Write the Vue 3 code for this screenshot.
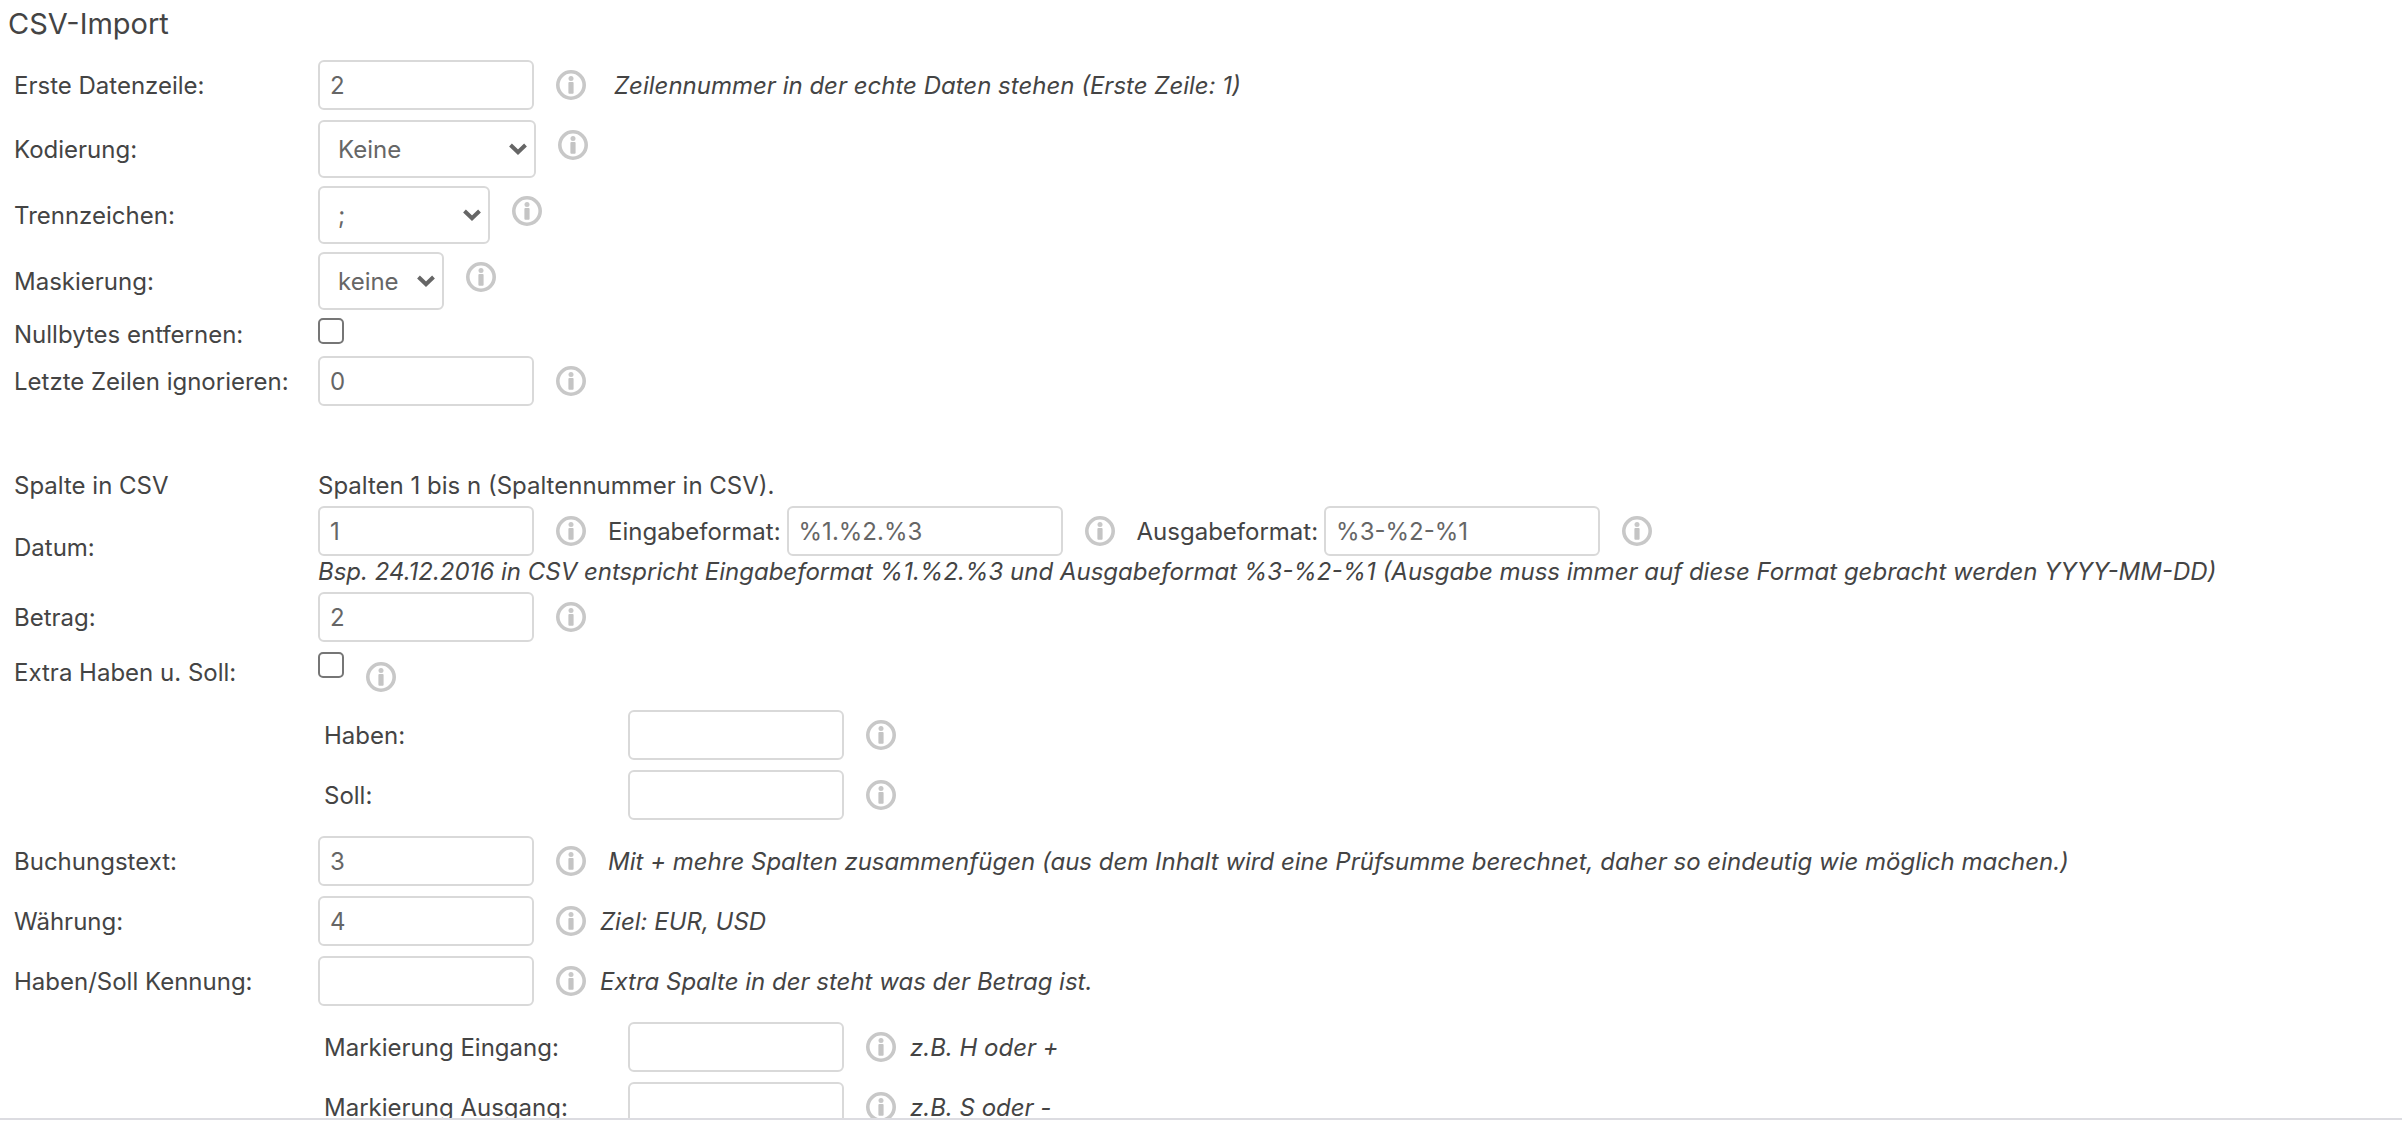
<script setup>
import { h, reactive } from 'vue'

const form = reactive({
  firstRow: '2',
  encoding: 'Keine',
  delimiter: ';',
  mask: 'keine',
  nullBytes: false,
  ignoreLast: '0',
  date: '1',
  inputFormat: '%1.%2.%3',
  outputFormat: '%3-%2-%1',
  amount: '2',
  splitAmount: false,
  credit: '',
  debit: '',
  text: '3',
  currency: '4',
  sign: '',
  signIn: '',
  signOut: ''
})

const InfoIcon = () =>
  h('svg', { viewBox: '0 0 30 30', role: 'img', 'aria-label': 'Info' }, [
    h('circle', { cx: 15, cy: 15, r: 13.2, fill: 'none', stroke: '#c8c8c8', 'stroke-width': 3.6 }),
    h('circle', { cx: 15, cy: 8.4, r: 2.5, fill: '#c8c8c8' }),
    h('rect', { x: 12.4, y: 12, width: 5.2, height: 11.8, rx: 1, fill: '#c4c4c4' })
  ])

const Chevron = () =>
  h('svg', { viewBox: '0 0 18 12', 'aria-hidden': 'true' }, [
    h('path', { d: 'M1.5 2 L9 9.2 L16.5 2', fill: 'none', stroke: '#666', 'stroke-width': 4 })
  ])
</script>

<template>
  <main class="page">
    <form class="panel" @submit.prevent>
      <h1 class="title">CSV-Import</h1>

      <div class="row">
        <label for="first-row">Erste Datenzeile:</label>
        <div class="field">
          <input id="first-row" v-model="form.firstRow" class="text" type="text" />
          <InfoIcon class="info" />
          <em class="hint far">Zeilennummer in der echte Daten stehen (Erste Zeile: 1)</em>
        </div>
      </div>

      <div class="row select-row">
        <label for="encoding">Kodierung:</label>
        <div class="field top">
          <span class="select wide">
            <select id="encoding" v-model="form.encoding"><option>Keine</option></select>
            <Chevron class="chevron" />
          </span>
          <InfoIcon class="info low" />
        </div>
      </div>

      <div class="row select-row">
        <label for="delimiter">Trennzeichen:</label>
        <div class="field top">
          <span class="select medium">
            <select id="delimiter" v-model="form.delimiter"><option>;</option></select>
            <Chevron class="chevron" />
          </span>
          <InfoIcon class="info low" />
        </div>
      </div>

      <div class="row select-row">
        <label for="mask">Maskierung:</label>
        <div class="field top">
          <span class="select narrow">
            <select id="mask" v-model="form.mask"><option>keine</option></select>
            <Chevron class="chevron" />
          </span>
          <InfoIcon class="info low" />
        </div>
      </div>

      <div class="row check-row">
        <label for="null-bytes">Nullbytes entfernen:</label>
        <div class="field top">
          <input id="null-bytes" v-model="form.nullBytes" class="check" type="checkbox" />
        </div>
      </div>

      <div class="row">
        <label for="ignore-last">Letzte Zeilen ignorieren:</label>
        <div class="field">
          <input id="ignore-last" v-model="form.ignoreLast" class="text" type="text" />
          <InfoIcon class="info" />
        </div>
      </div>

      <div class="row heading-row">
        <span>Spalte in CSV</span>
        <span>Spalten 1 bis n (Spaltennummer in CSV).</span>
      </div>

      <div class="row date-row">
        <label for="date">Datum:</label>
        <div>
          <div class="field">
            <input id="date" v-model="form.date" class="text" type="text" />
            <InfoIcon class="info" />
            <label class="inline" for="input-format">Eingabeformat:</label>
            <input id="input-format" v-model="form.inputFormat" class="text format" type="text" />
            <InfoIcon class="info" />
            <label class="inline" for="output-format">Ausgabeformat:</label>
            <input id="output-format" v-model="form.outputFormat" class="text format" type="text" />
            <InfoIcon class="info" />
          </div>
          <em class="note">Bsp. 24.12.2016 in CSV entspricht Eingabeformat %1.%2.%3 und Ausgabeformat %3-%2-%1 (Ausgabe muss immer auf diese Format gebracht werden YYYY-MM-DD)</em>
        </div>
      </div>

      <div class="row">
        <label for="amount">Betrag:</label>
        <div class="field">
          <input id="amount" v-model="form.amount" class="text" type="text" />
          <InfoIcon class="info" />
        </div>
      </div>

      <div class="row split-row">
        <label for="split-amount">Extra Haben u. Soll:</label>
        <div class="field top">
          <input id="split-amount" v-model="form.splitAmount" class="check" type="checkbox" />
          <InfoIcon class="info low" />
        </div>
      </div>

      <div class="nested">
        <div class="row">
          <label for="credit">Haben:</label>
          <div class="field">
            <input id="credit" v-model="form.credit" class="text" type="text" />
            <InfoIcon class="info" />
          </div>
        </div>
        <div class="row">
          <label for="debit">Soll:</label>
          <div class="field">
            <input id="debit" v-model="form.debit" class="text" type="text" />
            <InfoIcon class="info" />
          </div>
        </div>
      </div>

      <div class="row">
        <label for="booking-text">Buchungstext:</label>
        <div class="field">
          <input id="booking-text" v-model="form.text" class="text" type="text" />
          <InfoIcon class="info" />
          <em class="hint mid">Mit + mehre Spalten zusammenfügen (aus dem Inhalt wird eine Prüfsumme berechnet, daher so eindeutig wie möglich machen.)</em>
        </div>
      </div>

      <div class="row">
        <label for="currency">Währung:</label>
        <div class="field">
          <input id="currency" v-model="form.currency" class="text" type="text" />
          <InfoIcon class="info" />
          <em class="hint">Ziel: EUR, USD</em>
        </div>
      </div>

      <div class="row">
        <label for="sign">Haben/Soll Kennung:</label>
        <div class="field">
          <input id="sign" v-model="form.sign" class="text" type="text" />
          <InfoIcon class="info" />
          <em class="hint">Extra Spalte in der steht was der Betrag ist.</em>
        </div>
      </div>

      <div class="nested">
        <div class="row">
          <label for="sign-in">Markierung Eingang:</label>
          <div class="field">
            <input id="sign-in" v-model="form.signIn" class="text" type="text" />
            <InfoIcon class="info" />
            <em class="hint">z.B. H oder +</em>
          </div>
        </div>
        <div class="row">
          <label for="sign-out">Markierung Ausgang:</label>
          <div class="field">
            <input id="sign-out" v-model="form.signOut" class="text" type="text" />
            <InfoIcon class="info" />
            <em class="hint">z.B. S oder -</em>
          </div>
        </div>
      </div>
    </form>
  </main>
</template>

<style>
body {
  margin: 0;
  background: #fff;
}
</style>

<style scoped>
.page {
  box-sizing: border-box;
  display: flex;
  flex-direction: column;
  height: 100vh;
  padding-bottom: 2px;
  font-family: Inter, "Liberation Sans", sans-serif;
  font-size: 24px;
  line-height: 30px;
  color: #444;
}

.panel {
  flex: 1;
  min-height: 0;
  overflow: hidden;
  border-bottom: 2px solid #dcdce1;
}

.title {
  margin: 0;
  padding: 0 8px 7px;
  font-size: 29px;
  line-height: 48px;
  font-weight: 400;
}

.row {
  display: grid;
  grid-template-columns: 304px 1fr;
  align-items: center;
  padding: 5px 0 5px 14px;
  white-space: nowrap;
}

.row label,
.hint {
  padding-top: 2px;
}

.select-row {
  padding-bottom: 3px;
}

.check-row {
  padding-bottom: 1px;
}

.heading-row {
  margin-top: 60px;
  padding-top: 0;
  padding-bottom: 0;
}

.date-row {
  padding-bottom: 0;
}

.split-row {
  padding-bottom: 7px;
}

.nested {
  padding: 6px 0 6px 310px;
}

.field {
  display: flex;
  align-items: center;
}

.top {
  align-items: flex-start;
  align-self: start;
}

.text {
  box-sizing: border-box;
  width: 216px;
  height: 50px;
  padding: 0 10px;
  border: 2px solid #d9d9d9;
  border-radius: 6px;
  background: #fff;
  font: inherit;
  color: #666;
}

.format {
  width: 276px;
}

.select {
  position: relative;
  display: block;
  height: 58px;
}

.select select {
  box-sizing: border-box;
  width: 100%;
  height: 100%;
  padding: 1px 18px 0;
  border: 2px solid #d9d9d9;
  border-radius: 6px;
  appearance: none;
  background: #fff;
  font: inherit;
  color: #666;
}

.wide {
  width: 218px;
}

.medium {
  width: 172px;
}

.narrow {
  width: 126px;
}

.chevron {
  position: absolute;
  top: 23px;
  right: 9px;
  width: 18px;
  height: 12px;
  pointer-events: none;
}

.check {
  box-sizing: border-box;
  width: 26px;
  height: 26px;
  margin: 0;
  border: 2px solid #767676;
  border-radius: 5px;
  appearance: none;
  background: #fff;
}

.check:checked {
  background: #767676;
}

.info {
  flex: none;
  width: 30px;
  height: 30px;
  margin-left: 22px;
}

.low {
  margin-top: 10px;
}

.inline {
  margin: 0 6px 0 22px;
}

.hint {
  margin-left: 14px;
}

.mid {
  margin-left: 22px;
}

.far {
  margin-left: 28px;
}

.note {
  display: block;
  padding-top: 1px;
}
</style>
